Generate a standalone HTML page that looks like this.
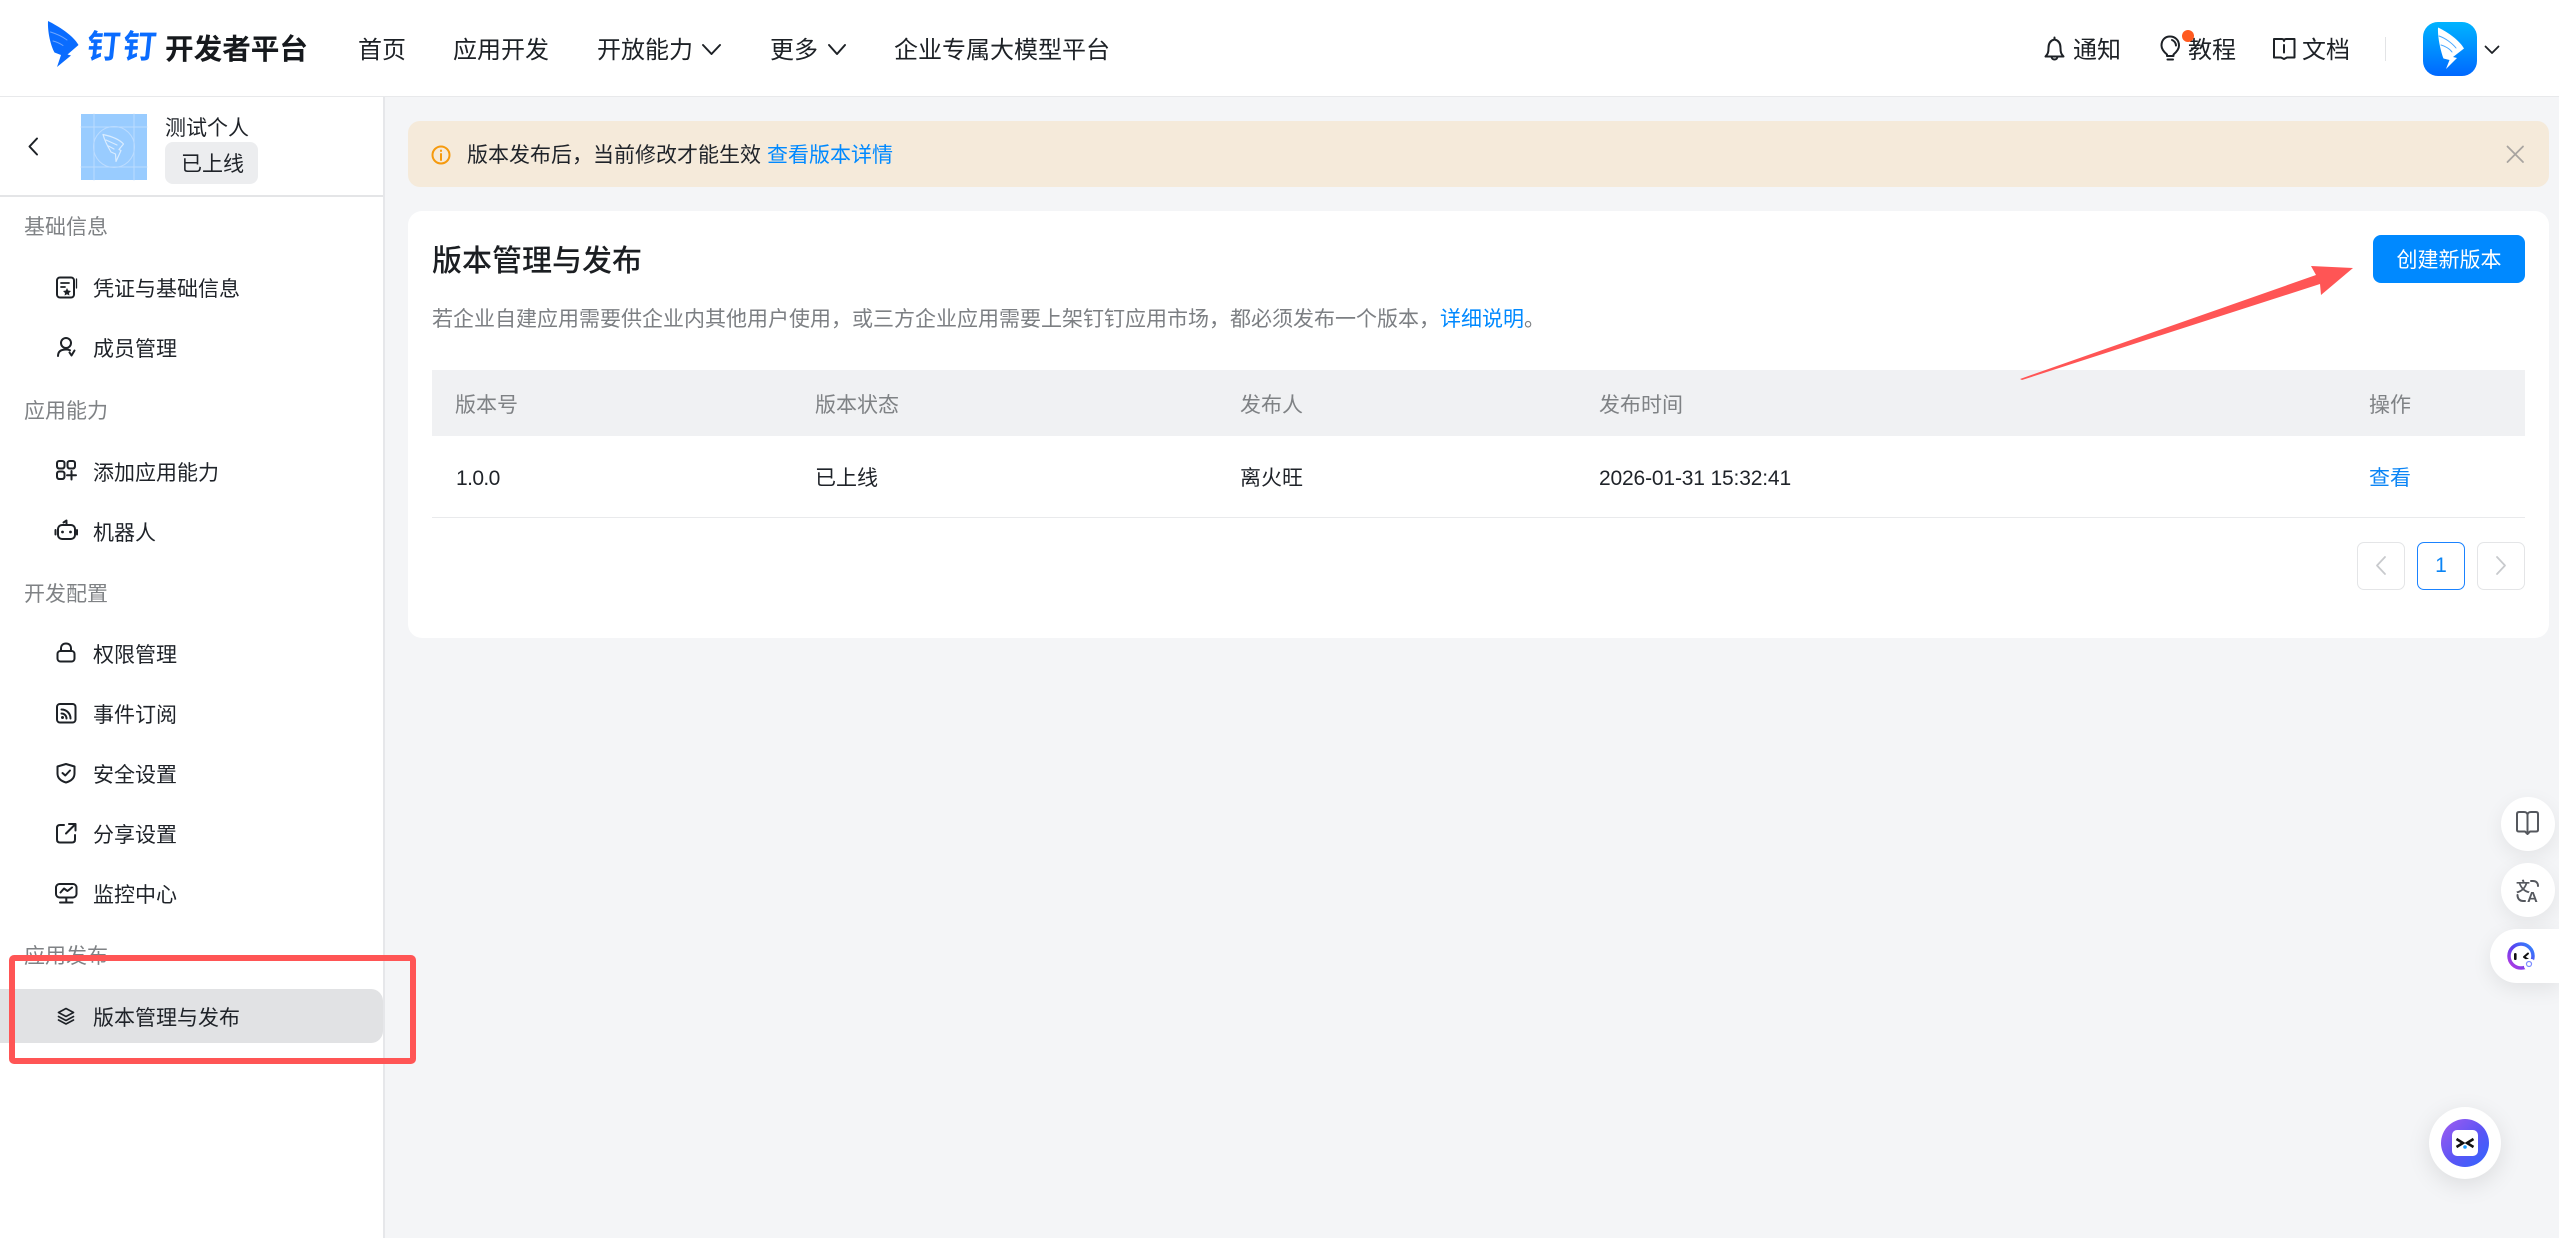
<!DOCTYPE html>
<html lang="zh-CN">
<head>
<meta charset="utf-8">
<title>版本管理与发布</title>
<style>
html,body{margin:0;padding:0;width:2559px;height:1238px;overflow:hidden;background:#F4F5F7;}
body{position:relative;font-family:"Liberation Sans","Noto Sans CJK SC",sans-serif;font-size:21px;color:#1f2329;}
.a{position:absolute;}
.t{position:absolute;height:32px;line-height:32px;white-space:nowrap;margin-top:2px;}
.g{color:#7f8285;}
.n{font-size:24px;height:36px;line-height:36px;color:#1d2126;margin-top:1px;}
.b{color:#0089ff;}
svg{position:absolute;left:0;top:0;overflow:visible;}
</style>
</head>
<body>
<!-- shell -->
<div class="a" style="left:0;top:0;width:2559px;height:96px;background:#fff;border-bottom:1px solid #e8e9eb;"></div>
<div class="a" style="left:0;top:97px;width:383px;height:1141px;background:#fff;border-right:2px solid #e6e7ea;"></div>
<div class="a" style="left:0;top:195px;width:383px;height:2px;background:#e4e5e7;"></div>
<div class="a" style="left:0;top:989px;width:383px;height:54px;background:#E1E2E4;border-radius:0 12px 12px 0;"></div>

<!-- header -->
<div class="t" style="left:87px;top:23px;height:44px;line-height:44px;font-size:33px;font-weight:700;color:#0a6cff;letter-spacing:3px;transform:skewX(-6deg);">钉钉</div>
<div class="t" style="left:165px;top:28px;height:40px;line-height:40px;font-size:28.6px;font-weight:700;color:#16191d;">开发者平台</div>
<div class="t n" style="left:358px;top:32px;">首页</div>
<div class="t n" style="left:453px;top:32px;">应用开发</div>
<div class="t n" style="left:597px;top:32px;">开放能力</div>
<div class="t n" style="left:770px;top:32px;">更多</div>
<div class="t n" style="left:894px;top:32px;">企业专属大模型平台</div>
<div class="t n" style="left:2073px;top:32px;">通知</div>
<div class="t n" style="left:2188px;top:32px;">教程</div>
<div class="t n" style="left:2302px;top:32px;">文档</div>
<div class="a" style="left:2385px;top:37px;width:1px;height:24px;background:#e3e4e6;"></div>
<div class="a" style="left:2423px;top:22px;width:54px;height:54px;border-radius:15px;background:linear-gradient(180deg,#00B4FF 0%,#0068FF 100%);"></div>

<!-- sidebar header -->
<div class="a" style="left:81px;top:114px;width:66px;height:66px;background:#99CCFF;"></div>
<div class="t" style="left:165px;top:111px;">测试个人</div>
<div class="a" style="left:165px;top:142px;width:93px;height:42px;background:#ECEDEF;border-radius:8px;"></div>
<div class="t" style="left:181px;top:147px;">已上线</div>

<!-- sidebar menu -->
<div class="t g" style="left:24px;top:210px;">基础信息</div>
<div class="t" style="left:93px;top:272px;">凭证与基础信息</div>
<div class="t" style="left:93px;top:332px;">成员管理</div>
<div class="t g" style="left:24px;top:394px;">应用能力</div>
<div class="t" style="left:93px;top:456px;">添加应用能力</div>
<div class="t" style="left:93px;top:516px;">机器人</div>
<div class="t g" style="left:24px;top:577px;">开发配置</div>
<div class="t" style="left:93px;top:638px;">权限管理</div>
<div class="t" style="left:93px;top:698px;">事件订阅</div>
<div class="t" style="left:93px;top:758px;">安全设置</div>
<div class="t" style="left:93px;top:818px;">分享设置</div>
<div class="t" style="left:93px;top:878px;">监控中心</div>
<div class="t g" style="left:24px;top:939px;">应用发布</div>
<div class="t" style="left:93px;top:1001px;">版本管理与发布</div>

<!-- alert -->
<div class="a" style="left:408px;top:121px;width:2141px;height:66px;background:#F5EADA;border-radius:12px;"></div>
<div class="t" style="left:467px;top:138px;">版本发布后，当前修改才能生效</div>
<div class="t b" style="left:767px;top:138px;">查看版本详情</div>

<!-- card -->
<div class="a" style="left:408px;top:211px;width:2141px;height:427px;background:#fff;border-radius:14px;"></div>
<div class="t" style="left:432px;top:240px;height:40px;line-height:40px;font-size:30px;font-weight:500;color:#1b1e22;">版本管理与发布</div>
<div class="t" style="left:432px;top:302px;color:#7c7f83;">若企业自建应用需要供企业内其他用户使用，或三方企业应用需要上架钉钉应用市场，都必须发布一个版本，<span class="b">详细说明</span><span style="color:#7c7f83;">。</span></div>
<div class="a" style="left:2373px;top:235px;width:152px;height:48px;background:#0089FF;border-radius:8px;color:#fff;line-height:52px;text-align:center;">创建新版本</div>

<!-- table -->
<div class="a" style="left:432px;top:370px;width:2093px;height:66px;background:#F0F1F3;"></div>
<div class="t g" style="left:455px;top:388px;">版本号</div>
<div class="t g" style="left:815px;top:388px;">版本状态</div>
<div class="t g" style="left:1240px;top:388px;">发布人</div>
<div class="t g" style="left:1599px;top:388px;">发布时间</div>
<div class="t g" style="left:2369px;top:388px;">操作</div>
<div class="t" style="left:456px;top:461px;letter-spacing:-.6px;">1.0.0</div>
<div class="t" style="left:815px;top:461px;">已上线</div>
<div class="t" style="left:1240px;top:461px;">离火旺</div>
<div class="t" style="left:1599px;top:461px;letter-spacing:-.16px;">2026-01-31 15:32:41</div>
<div class="t b" style="left:2369px;top:461px;color:#0a84f5;">查看</div>
<div class="a" style="left:432px;top:517px;width:2093px;height:1px;background:#e9eaec;"></div>

<!-- pagination -->
<div class="a" style="left:2357px;top:542px;width:46px;height:46px;border:1px solid #e4e5e7;border-radius:7px;"></div>
<div class="a" style="left:2417px;top:542px;width:46px;height:46px;border:1px solid #1a82ff;border-radius:7px;color:#0a84f5;line-height:46px;text-align:center;">1</div>
<div class="a" style="left:2477px;top:542px;width:46px;height:46px;border:1px solid #e4e5e7;border-radius:7px;"></div>

<!-- floating -->
<div class="a" style="left:2501px;top:797px;width:54px;height:54px;border-radius:50%;background:#fff;box-shadow:0 6px 20px rgba(0,0,0,.07);"></div>
<div class="a" style="left:2501px;top:863px;width:54px;height:54px;border-radius:50%;background:#fff;box-shadow:0 6px 20px rgba(0,0,0,.07);"></div>
<div class="a" style="left:2490px;top:929px;width:69px;height:54px;border-radius:27px 0 0 27px;background:#fff;box-shadow:0 6px 20px rgba(0,0,0,.08);"></div>
<div class="a" style="left:2429px;top:1107px;width:72px;height:72px;border-radius:50%;background:#fff;box-shadow:0 6px 24px rgba(0,0,0,.1);"></div>
<div class="a" style="left:2441px;top:1119px;width:48px;height:48px;border-radius:50%;background:linear-gradient(135deg,#A25CF0 0%,#5A55F5 55%,#2F66FF 100%);"></div>
<div class="a" style="left:2452px;top:1130px;width:26px;height:26px;border-radius:5px;background:#fff;"></div>

<!-- icons -->
<svg width="2559" height="1238" viewBox="0 0 2559 1238" fill="none" stroke="#1d2126" stroke-width="2" stroke-linecap="round" stroke-linejoin="round">
  <!-- logo bird -->
  <path d="M48 21C58 26 73 35 78.500 45L67.500 54.500L71 55.500L57 67L61 55L54.500 52.500C50.500 45 47.500 32 48 21Z" fill="#0a6cff" stroke="none"/>
  <path d="M50.500 32C57 34 63 37 67 40M53 41C57 42 60 43.500 63 45.500" stroke="#6ea6ff" stroke-width="1"/>

  <!-- nav chevrons -->
  <path d="M703 45L711.500 54L720 45" stroke-width="2"/>
  <path d="M829 45L837 54L845 45" stroke-width="2"/>

  <!-- bell -->
  <path d="M2054.500 37.500V39.500C2050 40.500 2048.500 44 2048.500 48C2048.500 52 2048 54 2045.500 56.500H2063.500C2061 54 2060.500 52 2060.500 48C2060.500 44 2059 40.500 2054.500 39.500M2051.500 56.500C2051.500 60.500 2057.500 60.500 2057.500 56.500"/>
  <!-- bulb -->
  <path d="M2167 54.500C2164 52 2161.500 49 2161.500 45.500C2161.500 40 2165 36.500 2170 36.500C2175 36.500 2179 40 2179 45.500C2179 49 2176.500 52 2173.500 54.500V56H2167ZM2167.500 59.500H2173M2172 40C2174.500 41 2175.800 43 2176 45.500"/>
  <circle cx="2188" cy="36" r="6" fill="#FF5A1F" stroke="none"/>
  <!-- book -->
  <path d="M2274 39H2282C2283.500 39 2284 40 2284 41C2284 40 2284.500 39 2286 39H2294.500V57.500H2287L2284 59L2281 57.500H2274ZM2284 45V52.500" />

  <!-- app icon bird -->
  <path d="M2438 27.500C2448 32 2460 41 2464 48.500L2453 57L2457 58L2446 69L2449.500 60L2443.500 58.500C2441 52 2437.500 38 2438 27.500Z" fill="#fff" stroke="none"/>
  <path d="M2439 36C2445 38 2452 43 2456 48M2441 45C2445 46 2450 49 2452 52" stroke="#4aa8ff" stroke-width="1"/>
  <path d="M2485.500 46.500L2492 53L2498.500 46.500" stroke-width="1.800"/>

  <!-- sidebar back -->
  <path d="M37 138.500L29.500 146.500L37 154.500" stroke-width="2"/>
  <!-- sidebar app icon watermark -->
  <path d="M81 127H147M81 167H147M94 114V180M134 114V180" stroke="#bcdcff" stroke-width="1"/>
  <circle cx="114" cy="147" r="20.500" stroke="#bcdcff" stroke-width="1"/>
  <path d="M103 134.500C110 136 119 139 123.500 144L119 149.500L121 150.500L116 161.500L115.500 154L111 152C108 147 104.500 140 103 134.500ZM106 140L117 145M108.500 146L114 149" stroke="#d9ecff" stroke-width="1.200"/>

  <!-- credential -->
  <rect x="57" y="277.500" width="17" height="20" rx="3" stroke-width="2"/>
  <path d="M61 283H69M61 287H65" stroke-width="1.800"/>
  <path d="M67 288L68.200 290.500L71 291L69 293L69.400 295.500L67 294.200L64.600 295.500L65 293L63 291L65.800 290.500Z" fill="#1d2126" stroke="none"/>
  <path d="M76.500 279V288" stroke-width="1.300"/>
  <!-- member -->
  <circle cx="66" cy="343" r="5"/>
  <path d="M58 356C58 351.500 61 349.500 66 349.500C67.500 349.500 69 349.800 70 350.300M69.500 352.500L71.500 355.500L74.500 350.500"/>
  <!-- grid -->
  <rect x="57" y="461" width="7.500" height="7.500" rx="2.200"/>
  <rect x="67.500" y="461" width="7.500" height="7.500" rx="2.200"/>
  <rect x="57" y="471.500" width="7.500" height="7.500" rx="2.200"/>
  <path d="M71.500 471V479.500M67 475.300H76"/>
  <!-- robot -->
  <rect x="58" y="525" width="17" height="14" rx="4"/>
  <path d="M66.500 525V521.500M63.500 522.500L66.500 520.500M55.500 530V534.500M77 530V534.500"/>
  <circle cx="62.500" cy="532" r="1.400" fill="#1d2126" stroke="none"/>
  <circle cx="70.500" cy="532" r="1.400" fill="#1d2126" stroke="none"/>
  <!-- lock -->
  <rect x="57.500" y="651" width="17" height="10.500" rx="3"/>
  <path d="M61 651V648.500C61 645.500 63 643.500 66 643.500C69 643.500 71 645.500 71 648.500V651"/>
  <!-- rss -->
  <rect x="57" y="704" width="18.500" height="18.500" rx="3"/>
  <path d="M61.500 709.500C66.500 709.500 70.500 713.500 70.500 718.500M61.500 713.500C64.300 713.500 66.500 715.700 66.500 718.500"/>
  <circle cx="62.500" cy="717.500" r="1.500" fill="#1d2126" stroke="none"/>
  <!-- shield -->
  <path d="M66 764L74.500 766.500V773.500C74.500 778 71 781 66 782.500C61 781 57.500 778 57.500 773.500V766.500Z"/>
  <path d="M62.500 773L65.300 775.500L70 770.500"/>
  <!-- share -->
  <path d="M64 825H60C58 825 57 826 57 828V839.500C57 841.500 58 842.500 60 842.500H72C74 842.500 75 841.500 75 839.500V835"/>
  <path d="M66 833.500L75 824.500M69 824H75.500V830.500"/>
  <!-- monitor -->
  <rect x="56" y="884" width="20.500" height="13.500" rx="3.500"/>
  <path d="M60.500 892.500L64 888.500L67.500 891L72 887.500M66.300 897.500V902M60 902.500H72.500"/>
  <!-- layers -->
  <path d="M66 1008.500L73.500 1012.500L66 1016.500L58.500 1012.500Z" stroke-width="1.600"/>
  <path d="M58.500 1016.500L66 1020.500L73.500 1016.500M58.500 1020L66 1024L73.500 1020" stroke-width="1.600"/>

  <!-- alert -->
  <circle cx="441" cy="155" r="8.500" stroke="#F59A0E" stroke-width="2"/>
  <path d="M441 154V160M441 150.500V151" stroke="#F59A0E" stroke-width="2"/>
  <path d="M2507.500 146.500L2523 162M2523 146.500L2507.500 162" stroke="#A8A4A0" stroke-width="1.800"/>

  <!-- pagination chevrons -->
  <path d="M2385 557L2377 565.500L2385 574" stroke="#c8cacd" stroke-width="1.800"/>
  <path d="M2497 557L2505 565.500L2497 574" stroke="#c8cacd" stroke-width="1.800"/>

  <!-- float book -->
  <path d="M2527.500 815C2527.500 813 2526 812 2524 812H2519C2517.500 812 2517 813 2517 814V830C2517 831 2517.500 831.500 2519 831.500H2525L2527.500 834L2530 831.500H2536C2537.500 831.500 2538 831 2538 830V814C2538 813 2537.500 812 2536 812H2531C2529 812 2527.500 813 2527.500 815ZM2527.500 815V832" stroke="#55585e" stroke-width="2"/>
  <!-- float translate -->
  <text x="2516" y="892" font-family="'Liberation Sans','Noto Sans CJK SC',sans-serif" font-size="14" font-weight="700" fill="#55585e" stroke="none">文</text>
  <text x="2527" y="902" font-family="'Liberation Sans',sans-serif" font-size="15" font-weight="700" fill="#55585e" stroke="none">A</text>
  <path d="M2531 881H2533C2536 881 2538 883 2538 886M2525 901H2523C2520 901 2517.500 899 2517.500 895" stroke="#55585e" stroke-width="2"/>

  <!-- float assistant -->
  <defs>
    <linearGradient id="r" x1="0" y1="1" x2="1" y2="0"><stop offset="0" stop-color="#C03AE0"/><stop offset=".5" stop-color="#5A40F0"/><stop offset="1" stop-color="#2F8CFF"/></linearGradient>
  </defs>
  <circle cx="2521" cy="956" r="12" stroke="url(#r)" stroke-width="3.500"/>
  <rect x="2514" y="953" width="2.600" height="7" rx="1.300" fill="#111" stroke="none"/>
  <path d="M2528 953.500L2524 957L2528 959.500" stroke="#111" stroke-width="2"/>
  <rect x="2524" y="959" width="10.500" height="10.500" rx="3" fill="#fff" stroke="none"/>
  <circle cx="2529" cy="964" r="2.500" stroke="#7a8cff" stroke-width="1.200"/>

  <!-- float bottom face -->
  <path d="M2456.500 1139L2463 1143L2456.500 1147" stroke="#111" stroke-width="2.600" stroke-linecap="butt" stroke-linejoin="miter"/>
  <path d="M2473.500 1139L2467 1143L2473.500 1147" stroke="#111" stroke-width="2.600" stroke-linecap="butt" stroke-linejoin="miter"/>
  <circle cx="2465" cy="1147" r="1.800" fill="#1a9cff" stroke="none"/>

  <!-- annotations -->
  <path d="M2020 379L2316 275L2311 266L2353 268L2321 295L2320 284L2022 380Z" fill="#FF5555" stroke="none"/>
  <rect x="12" y="958" width="401" height="103" rx="2" stroke="#FF5555" stroke-width="6"/>
</svg>
</body>
</html>
